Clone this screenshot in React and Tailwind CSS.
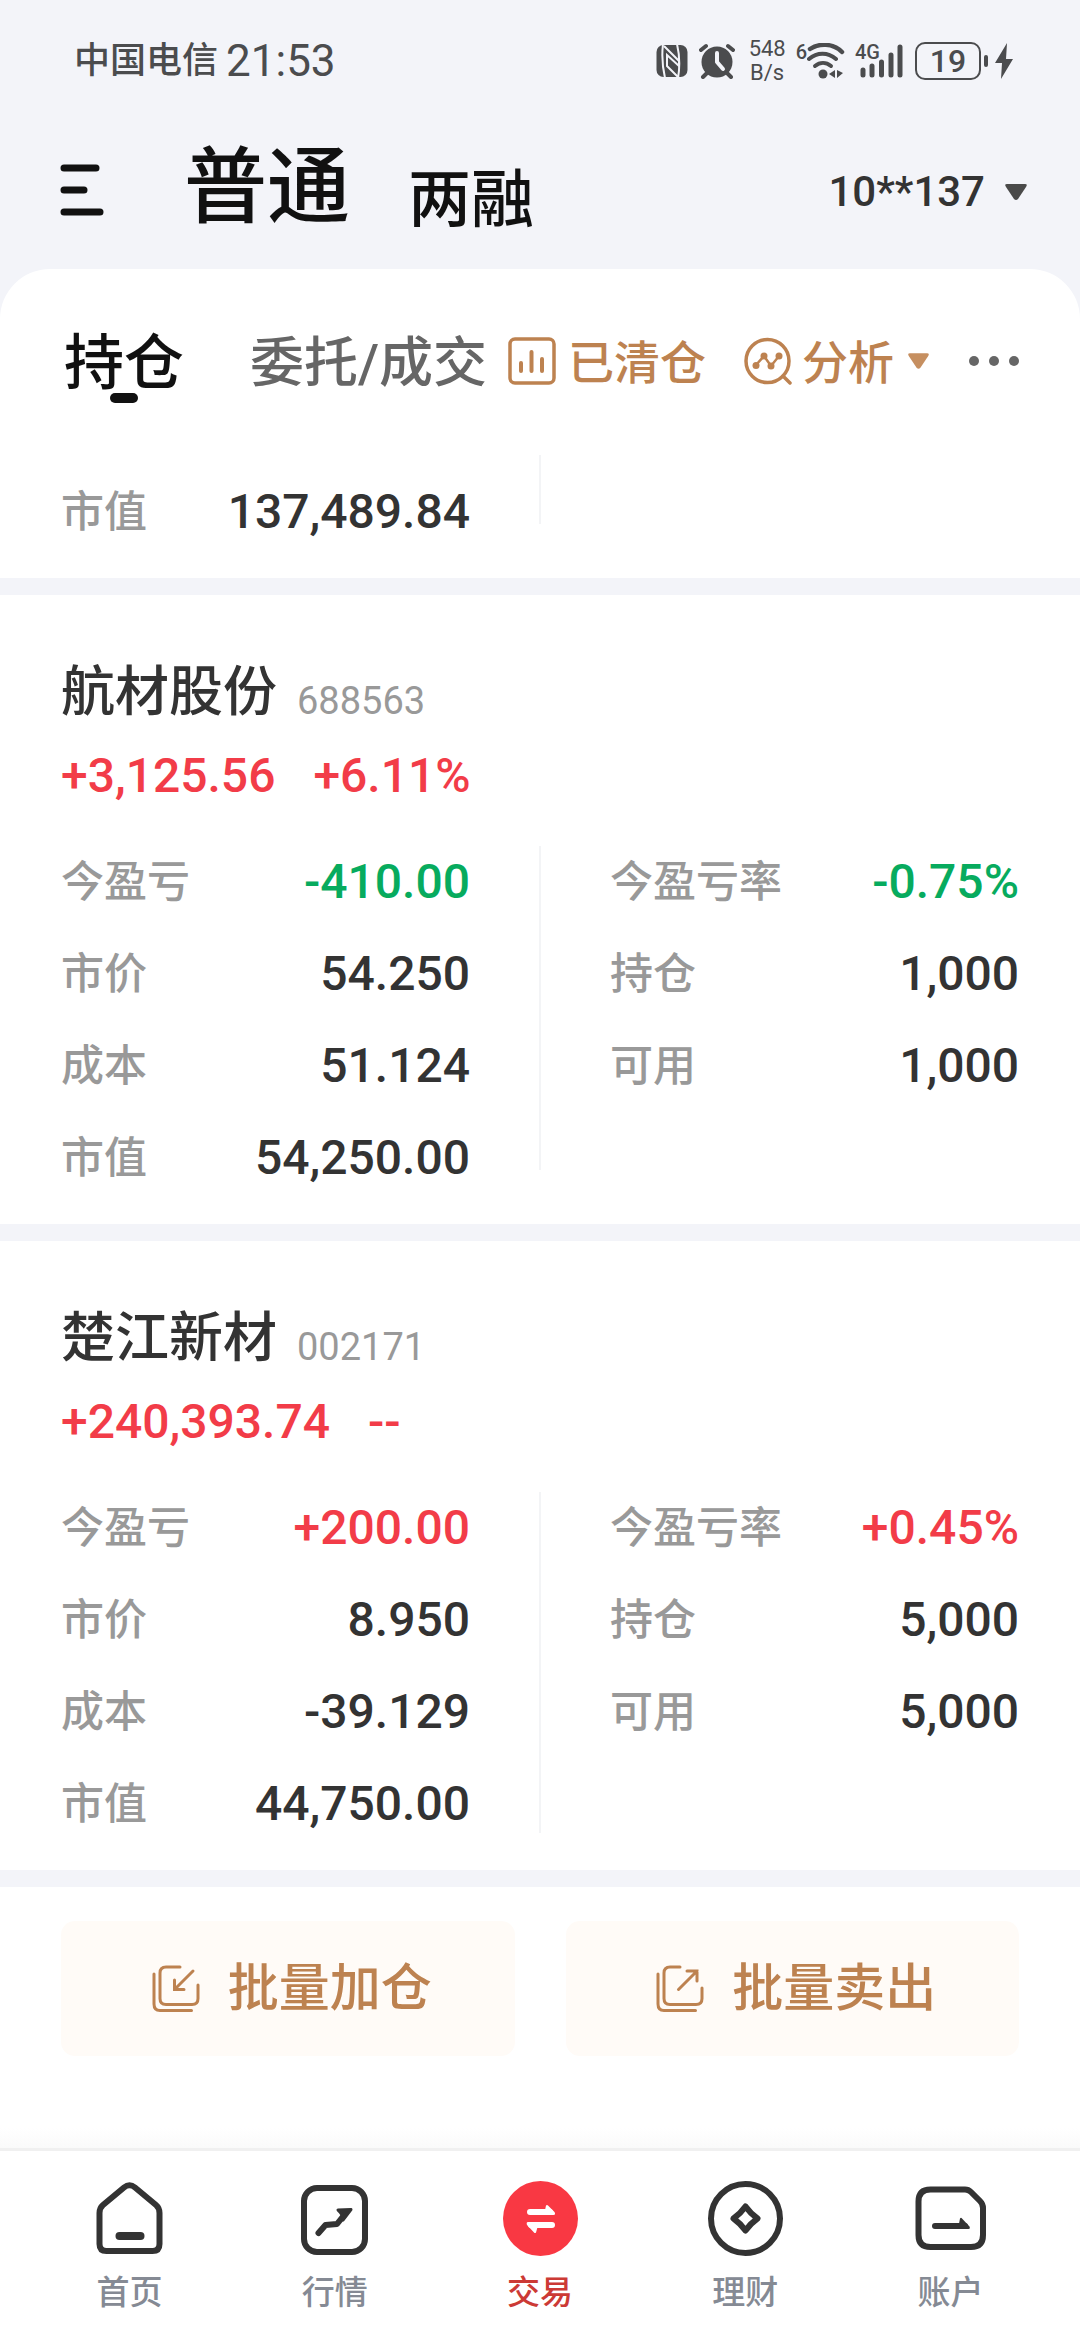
import React from 'react';

const holdings = [
  {
    name: '航材股份',
    code: '688563',
    profit: '+3,125.56',
    profitRate: '+6.11%',
    left: [
      { label: '今盈亏', value: '-410.00', tone: 'down' },
      { label: '市价', value: '54.250' },
      { label: '成本', value: '51.124' },
      { label: '市值', value: '54,250.00' },
    ],
    right: [
      { label: '今盈亏率', value: '-0.75%', tone: 'down' },
      { label: '持仓', value: '1,000' },
      { label: '可用', value: '1,000' },
    ],
  },
  {
    name: '楚江新材',
    code: '002171',
    profit: '+240,393.74',
    profitRate: '--',
    left: [
      { label: '今盈亏', value: '+200.00', tone: 'up' },
      { label: '市价', value: '8.950' },
      { label: '成本', value: '-39.129' },
      { label: '市值', value: '44,750.00' },
    ],
    right: [
      { label: '今盈亏率', value: '+0.45%', tone: 'up' },
      { label: '持仓', value: '5,000' },
      { label: '可用', value: '5,000' },
    ],
  },
];

const TONES = {
  up: 'text-[#f23c48]',
  down: 'text-[#07ab5e]',
};

function StatusBar() {
  return (
    <div className="flex items-center justify-between pl-[74px] pr-[67px] pt-[37px] text-[#4b4c4e]">
      <div className="flex items-center gap-2 leading-[48px]">
        <span className="text-[36px] font-medium">中国电信</span>
        <span className="text-[44px]">21:53</span>
      </div>
      <div className="flex items-center">
        {/* NFC */}
        <svg className="h-[34px] w-[32px]" viewBox="0 0 32 34" fill="none" stroke="#f3f4f9" strokeWidth="2">
          <rect x="0.500" y="1" width="31" height="32" rx="7" fill="#4b4c4e" stroke="none" />
          <path d="M7 0q-2 17 2 34" />
          <path d="M8 2l15 15v5L11 11v11l12 12" />
          <path d="M21 0q4 17 1 34" />
        </svg>
        {/* Alarm */}
        <svg className="ml-[11px] h-[36px] w-[36px]" viewBox="0 0 36 36" fill="none">
          <circle cx="18" cy="19" r="15.500" fill="currentColor" />
          <path d="M2 7l5-4M34 7l-5-4M8 30l-4 4M28 30l4 4" stroke="currentColor" strokeWidth="4" strokeLinecap="round" />
          <path d="M18 10v9l6 7" stroke="#f3f4f9" strokeWidth="4" strokeLinecap="round" strokeLinejoin="round" />
        </svg>
        <div className="ml-[14px] w-[37px] whitespace-nowrap text-center text-[22px] leading-[24px]">
          <p>548</p>
          <p>B/s</p>
        </div>
        {/* Wi-Fi */}
        <span className="ml-[10px] self-start pt-[3px] text-[20px] font-medium leading-[24px]">6</span>
        <svg className="h-[36px] w-[38px]" viewBox="0 0 38 36" fill="none" stroke="currentColor" strokeWidth="4" strokeLinecap="round">
          <path d="M3 6c9-6 23-6 32 3" strokeWidth="4.500" />
          <path d="M2 16c8-7 19-7 27 0" />
          <path d="M8 23c5-4 11-4 16 0" />
          <circle cx="16" cy="31" r="4.500" fill="currentColor" stroke="none" />
          <path d="M22 31l6-4v8zM30 27v8l6-5z" fill="currentColor" stroke="none" />
        </svg>
        {/* Signal */}
        <span className="ml-[10px] self-start pt-[3px] text-[20px] font-medium leading-[24px]">4G</span>
        <svg className="-ml-[21px] h-[36px] w-[44px]" viewBox="0 0 44 36" stroke="currentColor" strokeWidth="5" strokeLinecap="round">
          <path d="M4 27v5M13 23v9M22.500 19v13M32 12v20M41 4v28" />
        </svg>
        <span className="ml-[12px] flex h-[38px] w-[66px] items-center justify-center rounded-[10px] border-2 border-current text-[32px] font-medium leading-[32px]">
          19
        </span>
        <span className="ml-[3px] h-[12px] w-[4px] rounded-sm bg-current" />
        <svg className="ml-[7px] h-[36px] w-[18px]" viewBox="0 0 18 36" fill="currentColor">
          <path d="M12 0L0 20h7L6 36l12-20h-7z" />
        </svg>
      </div>
    </div>
  );
}

function Header() {
  return (
    <div className="mt-[53px] flex items-center pl-[60px] pr-[53px]">
      <button type="button" aria-label="菜单" className="mt-1">
        <svg className="h-[52px] w-[44px]" viewBox="0 0 44 52" stroke="#111" strokeWidth="7" strokeLinecap="round">
          <path d="M4 4h32M4 26h20M4 48h36" />
        </svg>
      </button>
      <div className="ml-[80px] flex items-end gap-[58px] text-[#111]">
        <button type="button" className="text-[83px] font-medium leading-[100px]">普通</button>
        <button type="button" className="text-[63px] font-medium leading-[76px]">两融</button>
      </div>
      <button type="button" className="ml-auto mt-2 flex items-center gap-5 text-[42px] font-medium leading-[48px] text-[#333]">
        10**137
        <svg className="h-[16px] w-[22px]" viewBox="0 0 22 16" fill="#4a4a4a">
          <path d="M2 0h18q3 0 1 3l-8 12q-2 2-4 0L1 3q-2-3 1-3z" />
        </svg>
      </button>
    </div>
  );
}

function Tabs() {
  return (
    <div className="flex items-center whitespace-nowrap pb-[55px] pl-[64px] pr-[61px] pt-[53px]">
      <button type="button" className="relative pt-[6px] text-[60px] font-medium leading-[72px] text-[#111]">
        持仓
        <span className="absolute -bottom-[3px] left-1/2 h-[10px] w-[28px] -translate-x-1/2 rounded-full bg-[#111]" />
      </button>
      <button type="button" className="ml-[66px] pt-[6px] text-[54px] font-medium leading-[72px] text-[#666]">委托/成交</button>
      <div className="ml-auto flex items-center text-[46px] leading-[72px] text-[#bd8250]">
        <button type="button" className="flex items-center gap-[12px] font-medium">
          <svg className="h-[48px] w-[48px]" viewBox="0 0 48 48" fill="none" stroke="currentColor" strokeWidth="3.500" strokeLinecap="round">
            <rect x="2" y="2" width="44" height="44" rx="5" />
            <path d="M13 26v8M23.500 15v19M34 22v12" strokeWidth="4" />
          </svg>
          <span className="pt-1">已清仓</span>
        </button>
        <button type="button" className="ml-[38px] flex items-center gap-[10px] font-medium">
          <svg className="h-[48px] w-[48px]" viewBox="0 0 48 48" fill="none" stroke="currentColor" strokeWidth="3.500" strokeLinecap="round">
            <circle cx="23.500" cy="24" r="21.500" />
            <path d="M39 39l7 7" />
            <path d="M12 28l8-9 7 10 8-10" strokeWidth="2.500" />
            <g fill="currentColor" stroke="none">
              <circle cx="12" cy="28.500" r="3.500" />
              <circle cx="20" cy="19" r="3.500" />
              <circle cx="27" cy="29" r="3.500" />
              <circle cx="35" cy="19" r="3.500" />
            </g>
          </svg>
          <span className="pt-1">分析</span>
          <svg className="ml-1 h-[16px] w-[21px]" viewBox="0 0 22 16" fill="#c68f60">
            <path d="M2 0h18q3 0 1 3l-8 12q-2 2-4 0L1 3q-2-3 1-3z" />
          </svg>
        </button>
        <button type="button" aria-label="更多" className="ml-[40px] flex gap-[10px]">
          <span className="h-[10px] w-[10px] rounded-full bg-[#666]" />
          <span className="h-[10px] w-[10px] rounded-full bg-[#666]" />
          <span className="h-[10px] w-[10px] rounded-full bg-[#666]" />
        </button>
      </div>
    </div>
  );
}

function Column({ items }) {
  return (
    <dl className="flex flex-1 flex-col gap-8">
      {items.map((item) => (
        <div key={item.label} className="flex items-center justify-between leading-[60px]">
          <dt className="text-[43px] font-medium text-[#999]">{item.label}</dt>
          <dd className={`text-[48px] font-medium ${TONES[item.tone] || 'text-[#333]'}`}>{item.value}</dd>
        </div>
      ))}
    </dl>
  );
}

function Details({ left, right, className = '', dividerClass = 'mb-[54px]' }) {
  return (
    <div className="flex gap-[69px] px-[61px]">
      <div className={`flex flex-1 pb-[36px] ${className}`}>
        <Column items={left} />
      </div>
      <div className={`w-[2px] bg-[#f3f4f6] ${dividerClass}`} />
      <div className={`flex flex-1 pb-[36px] ${className}`}>
        <Column items={right} />
      </div>
    </div>
  );
}

function HoldingCard({ holding, last }) {
  return (
    <section className="border-b-[17px] border-[#f3f4f9] pt-[68px]">
      <div className="flex items-end gap-5 px-[61px]">
        <h2 className="text-[54px] font-medium leading-[60px] text-[#333]">{holding.name}</h2>
        <span className="text-[38px] leading-[44px] text-[#999]">{holding.code}</span>
      </div>
      <div className="mb-[40px] mt-[23px] flex gap-[38px] px-[61px] text-[48px] font-medium leading-[60px] text-[#f23c48]">
        <span>{holding.profit}</span>
        <span>{holding.profitRate}</span>
      </div>
      <Details
        left={holding.left}
        right={holding.right}
        className="pt-[6px]"
        dividerClass={last ? 'mb-[37px]' : 'mb-[54px]'}
      />
    </section>
  );
}

function BatchActions() {
  return (
    <div className="flex gap-[51px] px-[61px] pt-[34px] text-[51px] font-medium leading-[75px] text-[#bd8250]">
      <button type="button" className="flex flex-1 items-center justify-center gap-[28px] rounded-[14px] bg-[#fffbf7] py-[30px] pl-2">
        <svg className="h-[48px] w-[48px]" viewBox="0 0 48 48" fill="none" stroke="currentColor" strokeWidth="3" strokeLinecap="round">
          <path d="M2 9v30q0 6.500 6 6.500h31.500" />
          <path d="M28 2H14q-6 0-6 6v25.500q0 6 6 6h26q6 0 6-6V20" />
          <path d="M41 6L22.500 24.500M22.500 15v9.500H32" />
        </svg>
        批量加仓
      </button>
      <button type="button" className="flex flex-1 items-center justify-center gap-[28px] rounded-[14px] bg-[#fffbf7] py-[30px] pl-2">
        <svg className="h-[48px] w-[48px]" viewBox="0 0 48 48" fill="none" stroke="currentColor" strokeWidth="3" strokeLinecap="round">
          <path d="M2 9v30q0 6.500 6 6.500h31.500" />
          <path d="M24 2H14q-6 0-6 6v25.500q0 6 6 6h26q6 0 6-6V23" />
          <path d="M22.500 24.500L41 6M31 6h10v10" />
        </svg>
        批量卖出
      </button>
    </div>
  );
}

const navItems = [
  {
    label: '首页',
    icon: (
      <g fill="none" stroke="#333" strokeWidth="6">
        <path d="M7.500 32q0-5 3.500-8L32 6.500q5.500-4.500 11 0L64 24q3.500 3 3.500 8v31q0 7-7 7h-46q-7 0-7-7z" />
        <path d="M27.500 55h21" strokeWidth="8" strokeLinecap="round" />
      </g>
    ),
  },
  {
    label: '行情',
    icon: (
      <g fill="none" stroke="#333" strokeWidth="6">
        <rect x="7" y="7" width="61" height="64" rx="13" />
        <path d="M21.500 52l7-8 11.500-1 8-10" strokeLinecap="round" strokeLinejoin="round" />
        <path d="M41 29l13-.5L46 39q0-6-5-10z" fill="#333" strokeWidth="3" strokeLinejoin="round" />
      </g>
    ),
  },
  {
    label: '交易',
    active: true,
    icon: (
      <g>
        <circle cx="37.500" cy="37.500" r="37.500" fill="#f93843" />
        <g fill="none" stroke="#fff" strokeWidth="6" strokeLinecap="round">
          <path d="M27 31h20M28 44h21" />
        </g>
        <path d="M43 24.500q1-1 2 0l6.500 6.500q1.500 3-1 3H41zM33 51.500q-1 1-2 0L24 44q-1-3 1-3h11z" fill="#fff" />
      </g>
    ),
  },
  {
    label: '理财',
    icon: (
      <g fill="none" stroke="#333" strokeWidth="6">
        <circle cx="37.500" cy="37.500" r="34.500" />
        <path d="M37.500 25.500q5 7 12 12-7 5-12 12-5-7-12-12 7-5 12-12z" strokeLinejoin="round" />
      </g>
    ),
  },
  {
    label: '账户',
    icon: (
      <g fill="none" stroke="#333" strokeWidth="6">
        <path d="M17.500 8.500H52q3.500 0 6 2.500l9 9q3 3 3 7v27q0 12-12 12H17.500q-12 0-12-12v-33.500q0-12 12-12z" />
        <path d="M22 45h30" strokeLinecap="round" />
        <path d="M47 37.500q1-1.500 2 0l7.500 8q1 2.500-1 2.500H45z" fill="#333" stroke="none" />
      </g>
    ),
  },
];

function BottomNav() {
  return (
    <>
      <div className="h-[20px] bg-linear-to-b from-white to-[#fafafa]" />
      <nav className="flex border-t-[3px] border-[#f0f0f0] px-[27px] pb-[27px] pt-[30px]">
        {navItems.map((item) => (
          <a
            key={item.label}
            href="#"
            className={`flex flex-1 flex-col items-center gap-[17px] text-[33px] font-medium leading-[40px] ${
              item.active ? 'text-[#cc3a35]' : 'text-[#858a94]'
            }`}
          >
            <svg className="h-[75px] w-[75px]" viewBox="0 0 75 75">{item.icon}</svg>
            {item.label}
          </a>
        ))}
      </nav>
    </>
  );
}

function App() {
  return (
    <div className="flex min-h-screen flex-col bg-[#f3f4f9] font-[Roboto,'Noto_Sans_CJK_SC',sans-serif]">
      <header className="pb-[31px]">
        <StatusBar />
        <Header />
      </header>
      <main className="flex flex-1 flex-col rounded-t-[50px] bg-white">
        <Tabs />
        <section className="border-b-[17px] border-[#f3f4f9]">
          <Details left={[{ label: '市值', value: '137,489.84' }]} right={[]} className="pt-[27px]" />
        </section>
        {holdings.map((holding, index) => (
          <HoldingCard key={holding.code} holding={holding} last={index === holdings.length - 1} />
        ))}
        <BatchActions />
        <div className="mt-auto">
          <BottomNav />
        </div>
      </main>
    </div>
  );
}

export default App;
